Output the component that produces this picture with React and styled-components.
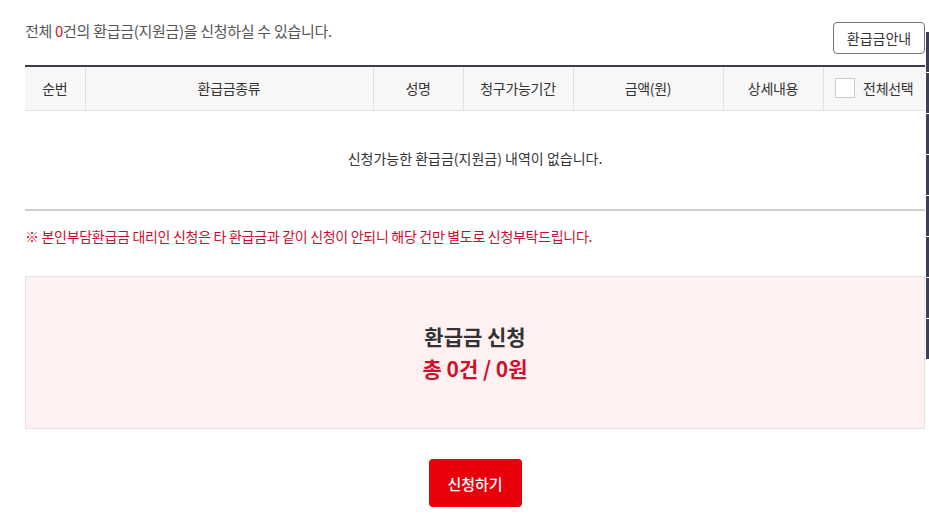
import React from 'react';
import styled, { createGlobalStyle } from 'styled-components';

const GlobalStyle = createGlobalStyle`
  html, body {
    margin: 0;
    padding: 0;
    background: #fff;
  }
  body {
    font-family: "Noto Sans CJK KR", "Noto Sans", sans-serif;
    color: #333;
  }
  * {
    box-sizing: border-box;
  }
`;

const Page = styled.div`
  width: 900px;
  margin-left: 25px;
  padding-top: 20px;
`;

const TopBar = styled.div`
  display: flex;
  justify-content: space-between;
  align-items: flex-end;
  margin-bottom: 11px;
`;

const Summary = styled.p`
  margin: 0 0 13px;
  font-size: 15px;
  color: #555;
  letter-spacing: -0.3px;
`;

const Red = styled.span`
  color: #e0112b;
`;

const GuideButton = styled.button`
  width: 92px;
  height: 32px;
  padding: 0;
  border: 1px solid #777;
  border-radius: 4px;
  background: #fff;
  font-family: inherit;
  font-size: 14px;
  color: #333;
`;

const Table = styled.table`
  width: 100%;
  border-collapse: collapse;
  table-layout: fixed;
  border-top: 2px solid #3d3d4f;
`;

const Th = styled.th`
  height: 44px;
  background: #f7f7f7;
  border-left: 1px solid #e2e2e2;
  border-bottom: 1px solid #e2e2e2;
  font-size: 14px;
  font-weight: 400;
  color: #333;
  letter-spacing: -0.3px;
  &:first-child {
    border-left: none;
  }
`;

const SelectAll = styled.label`
  display: flex;
  align-items: center;
  justify-content: center;
  gap: 8px;
`;

const Box = styled.span`
  width: 20px;
  height: 20px;
  border: 1px solid #ccc;
  background: #fff;
`;

const EmptyCell = styled.td`
  height: 100px;
  text-align: center;
  font-size: 14px;
  color: #333;
  border-bottom: 2px solid #cfcfcf;
  padding-bottom: 4px;
`;

const Notice = styled.p`
  margin: 15px 0 30px;
  font-size: 14px;
  color: #c8102e;
  letter-spacing: -0.3px;
`;

const SummaryBox = styled.div`
  height: 153px;
  background: #fff1f2;
  border: 1px solid #e4e4e4;
  display: flex;
  flex-direction: column;
  align-items: center;
  justify-content: center;
  padding-bottom: 2px;
`;

const BoxTitle = styled.div`
  font-size: 21px;
  font-weight: 700;
  color: #333;
  line-height: 32px;
`;

const BoxTotal = styled.div`
  font-size: 21px;
  font-weight: 700;
  color: #d0102b;
  line-height: 32px;
`;

const Actions = styled.div`
  display: flex;
  justify-content: center;
  padding-top: 30px;
`;

const ApplyButton = styled.button`
  width: 93px;
  height: 48px;
  border: none;
  border-radius: 4px;
  background: #e8000b;
  color: #fff;
  font-family: inherit;
  font-size: 15px;
  font-weight: 500;
`;

const QuickRail = styled.div`
  position: fixed;
  top: 32px;
  right: 0;
  width: 3px;
  display: flex;
  flex-direction: column;
  gap: 1px;
`;

const RailItem = styled.div`
  height: 40px;
  background: #3d3f52;
`;

const columns = [
  { label: '순번', width: 60 },
  { label: '환급금종류', width: 288 },
  { label: '성명', width: 90 },
  { label: '청구가능기간', width: 110 },
  { label: '금액(원)', width: 150 },
  { label: '상세내용', width: 100 },
];

export default function App() {
  return (
    <>
      <GlobalStyle />
      <Page>
        <TopBar>
          <Summary>
            전체 <Red>0</Red>건의 환급금(지원금)을 신청하실 수 있습니다.
          </Summary>
          <GuideButton>환급금안내</GuideButton>
        </TopBar>
        <Table>
          <colgroup>
            {columns.map((c) => (
              <col key={c.label} style={{ width: c.width }} />
            ))}
            <col />
          </colgroup>
          <thead>
            <tr>
              {columns.map((c) => (
                <Th key={c.label}>{c.label}</Th>
              ))}
              <Th>
                <SelectAll>
                  <Box />
                  전체선택
                </SelectAll>
              </Th>
            </tr>
          </thead>
          <tbody>
            <tr>
              <EmptyCell colSpan={7}>신청가능한 환급금(지원금) 내역이 없습니다.</EmptyCell>
            </tr>
          </tbody>
        </Table>
        <Notice>※ 본인부담환급금 대리인 신청은 타 환급금과 같이 신청이 안되니 해당 건만 별도로 신청부탁드립니다.</Notice>
        <SummaryBox>
          <BoxTitle>환급금 신청</BoxTitle>
          <BoxTotal>총 0건 / 0원</BoxTotal>
        </SummaryBox>
        <Actions>
          <ApplyButton>신청하기</ApplyButton>
        </Actions>
      </Page>
      <QuickRail>
        {Array.from({ length: 8 }).map((_, i) => (
          <RailItem key={i} />
        ))}
      </QuickRail>
    </>
  );
}
